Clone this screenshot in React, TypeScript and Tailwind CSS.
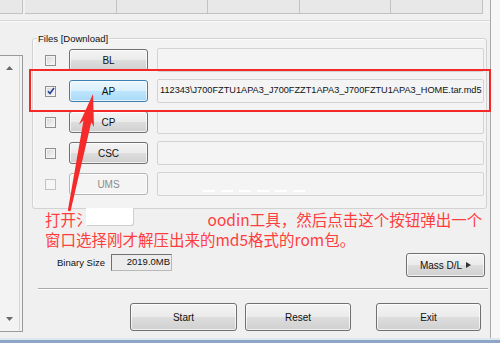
import React from "react";

function Checkbox({ checked = false, disabled = false }: { checked?: boolean; disabled?: boolean }) {
  return (
    <div
      className={
        "w-[11px] h-[11px] flex items-center justify-center border " +
        (disabled
          ? "border-[#c4c4c4] bg-[#f6f6f6]"
          : "border-[#8f8f8f] bg-[linear-gradient(135deg,#d8d8d8,#f8f8f8)] shadow-[inset_0_0_0_1px_#f4f4f4]")
      }
    >
      {checked && (
        <svg width="8" height="8" viewBox="0 0 8 8">
          <path d="M1 4.2 L3 6.5 L7 1" stroke="#21409a" strokeWidth="1.6" fill="none" />
        </svg>
      )}
    </div>
  );
}

function WinButton({
  label,
  w,
  h = 22,
  variant = "normal",
  children,
}: {
  label: string;
  w: number;
  h?: number;
  variant?: "normal" | "hot" | "disabled";
  children?: React.ReactNode;
}) {
  const cls =
    variant === "hot"
      ? "border-[#3c7fb1] bg-[linear-gradient(180deg,#eaf6fd,#d9f0fc_50%,#bee6fd_50%,#a7d9f5)] text-[#111]"
      : variant === "disabled"
      ? "border-[#b5b5b5] bg-[#f4f4f4] text-[#8c8c8c]"
      : "border-[#707070] bg-[linear-gradient(180deg,#f4f4f4,#ebebeb_48%,#dddddd_52%,#d0d0d0)] text-[#111]";
  return (
    <div
      className={
        "shrink-0 flex items-center justify-center rounded-[3px] border text-[10px] shadow-[inset_0_0_0_1px_rgba(255,255,255,0.7)] " +
        cls
      }
      style={{ width: w, height: h }}
    >
      {label}
      {children}
    </div>
  );
}

function FileRow({
  label,
  checked,
  hot,
  disabled,
  value,
}: {
  label: string;
  checked?: boolean;
  hot?: boolean;
  disabled?: boolean;
  value?: string;
}) {
  return (
    <div className="flex items-center h-[24px]">
      <Checkbox checked={checked} disabled={disabled} />
      <div className="ml-[13px]">
        <WinButton label={label} w={79} variant={hot ? "hot" : disabled ? "disabled" : "normal"} />
      </div>
      <div className="ml-[9px] w-[327px] h-[24px] rounded-[2px] border border-[#d3d3d3] bg-[#f4f4f4] flex items-center pl-[2px] text-[9.2px] text-[#111] whitespace-nowrap overflow-hidden">
        {value}
      </div>
    </div>
  );
}

export default function App() {
  const tip = "M93 94 L94 127 L91.3 122.2 L70.5 211.3 L67.8 210.7 L83.5 120.6 L79 124.5 Z";
  return (
    <div className="relative w-[500px] h-[343px] overflow-hidden bg-[#f0f0f0] font-['Liberation_Sans',Arial,sans-serif] text-[#111]">
      <div className="flex h-[338px]">
        <div className="w-[490px] flex flex-col">
          {/* top strip */}
          <div className="flex h-[14px]">
            <div className="w-[23px] h-[14px] bg-[#e8e8e8] border-b border-r border-[#c2c2c2]" />
            <div className="w-[2px]" />
            {[0, 1, 2, 3, 4].map((i) => (
              <div key={i} className="w-[91.6px] h-[14px] bg-[#e8e8e8] border-b border-r border-[#c2c2c2]" />
            ))}
          </div>
          <div className="mt-[6px] flex-1 flex border-t border-[#d6d6d6] shadow-[inset_0_1px_0_#fafafa]">
            {/* left list */}
            <div className="w-[25px] shrink-0 pt-[34px]">
              <div className="w-[23px] h-[277px] border border-l-0 border-[#9a9a9a] bg-[#f3f3f3] flex">
                <div className="w-[20px] h-full border-r border-[#d6d6d6] flex flex-col items-center justify-between py-[10px]">
                  <svg width="7" height="4" viewBox="0 0 7 4">
                    <path d="M0 4 L3.5 0 L7 4 Z" fill="#6a6a6a" />
                  </svg>
                  <svg width="7" height="4" viewBox="0 0 7 4">
                    <path d="M0 0 L3.5 4 L7 0 Z" fill="#6a6a6a" />
                  </svg>
                </div>
              </div>
            </div>
            {/* right content */}
            <div className="flex-1 flex flex-col">
              {/* groupbox */}
              <div className="relative ml-[7px] mt-[17px] w-[455px] h-[171px] rounded-[3px] border border-[#d2d2d2] bg-[#f3f3f3] shadow-[inset_1px_1px_0_#fbfbfb] pl-[12px] pt-[9px] flex flex-col gap-[7px]">
                <span className="absolute left-[4px] top-[-6px] bg-[#f0f0f0] px-[1px] text-[9.5px] leading-[11px]">
                  Files [Download]
                </span>
                <FileRow label="BL" />
                <FileRow
                  label="AP"
                  checked
                  hot
                  value="112343\J700FZTU1APA3_J700FZZT1APA3_J700FZTU1APA3_HOME.tar.md5"
                />
                <FileRow label="CP" />
                <FileRow label="CSC" />
                <FileRow label="UMS" disabled />
              </div>
              {/* annotation text */}
              <div className="ml-[20px] font-['Noto_Sans_CJK_SC',sans-serif] text-[15.5px] leading-[20px] text-[#ff3d3d] whitespace-nowrap">
                <div className="flex">
                  <span>打开氵</span>
                  <span className="ml-[116px]">oodin工具，然后点击这个按钮弹出一个</span>
                </div>
                <div>窗口选择刚才解压出来的md5格式的rom包。</div>
              </div>
              {/* binary size row */}
              <div className="mt-[4px] flex items-start">
                <div className="ml-[32px] mt-[4px] text-[9.5px] leading-[12px]">Binary Size</div>
                <div className="ml-[6px] mt-[1px] w-[61px] h-[17px] border border-[#b8b8b8] border-t-[#707070] border-l-[#707070] bg-[#ececec] flex items-center justify-end pr-[1px] text-[9.5px]">
                  2019.0MB
                </div>
                <div className="ml-[234px]">
                  <WinButton label="Mass D/L" w={79} h={24}>
                    <svg width="5" height="6" viewBox="0 0 5 6" className="ml-[4px]">
                      <path d="M0 0 L5 3 L0 6 Z" fill="#333" />
                    </svg>
                  </WinButton>
                </div>
              </div>
              {/* separator */}
              <div className="ml-[13px] mt-[11px] w-[450px] h-[2px] border-t border-[#a9a9a9] border-b border-b-white" />
              {/* bottom buttons */}
              <div className="mt-[13px] flex">
                <div className="ml-[105px]">
                  <WinButton label="Start" w={107} h={28} />
                </div>
                <div className="ml-[8px]">
                  <WinButton label="Reset" w={106} h={28} />
                </div>
                <div className="ml-[25px]">
                  <WinButton label="Exit" w={105} h={28} />
                </div>
              </div>
            </div>
          </div>
        </div>
        {/* right frame */}
        <div className="w-[10px] border-l border-[#a8a8a8] bg-[#f7f7f7]" />
      </div>
      {/* bottom window frame */}
      <div className="h-[2px] bg-[#dfe6ee]" />
      <div className="h-[3px] bg-[#8da6c8]" />

      {/* annotation overlays */}
      <div className="absolute left-[29px] top-[69px] w-[462px] h-[43px] border-2 border-[#f52828]" />
      <div className="absolute left-[86px] top-[208px] w-[47px] h-[17px] bg-white rounded-br-[3px] shadow-[1px_1px_0_#cfcfcf]" />
      <div className="absolute left-[203px] top-[190px] w-[110px] h-[3px] flex gap-[6px]">
        {[0, 1, 2, 3, 4, 5].map((i) => (
          <div key={i} className="w-[12px] h-[2px] bg-white" />
        ))}
      </div>
      <svg className="absolute left-0 top-0 pointer-events-none" width="500" height="343" viewBox="0 0 500 343">
        <path d={tip} fill="#f52a2a" />
      </svg>
    </div>
  );
}
